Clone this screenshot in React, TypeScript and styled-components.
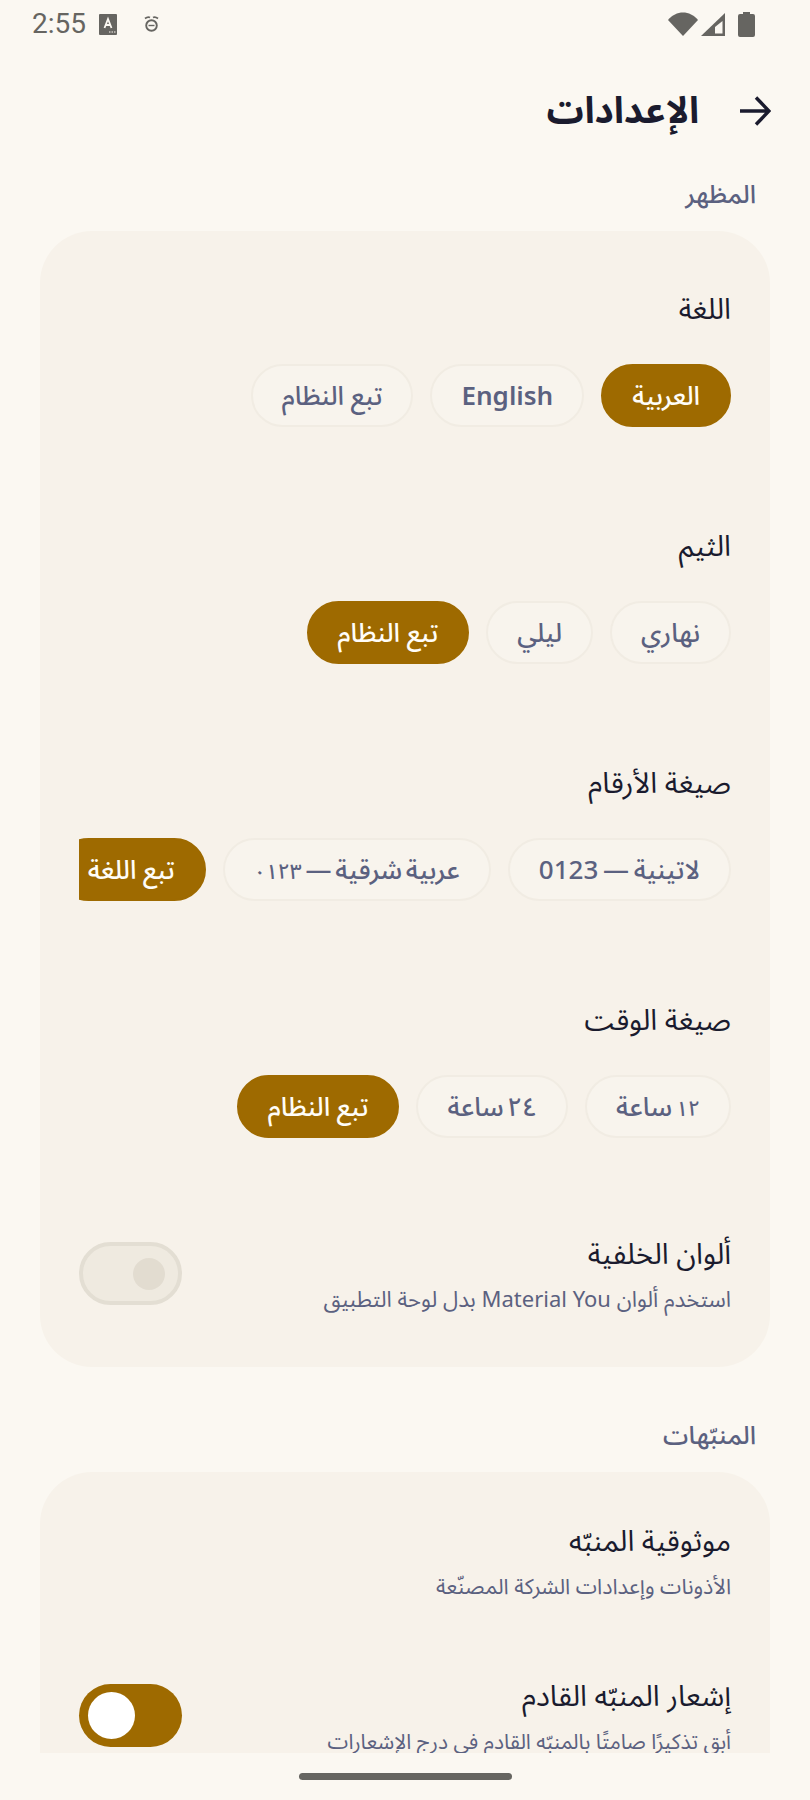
import React from 'react';
import styled, { createGlobalStyle } from 'styled-components';

const GlobalStyle = createGlobalStyle`
  html, body {
    margin: 0;
    padding: 0;
    background: #fbf8f2;
  }
  * {
    box-sizing: border-box;
  }
`

const Screen = styled.div`
  width: 810px;
  height: 1800px;
  overflow: hidden;
  background: #fbf8f2;
  font-family: "Noto Sans Arabic", "IBM Plex Sans Arabic", "Noto Sans", "DejaVu Sans", sans-serif;
  display: flex;
  flex-direction: column;
`
const StatusBar = styled.div`
  height: 48px;
  flex-shrink: 0;
  display: flex;
  align-items: center;
  justify-content: space-between;
  padding: 0 55px 0 32px;
  color: #666561;
`
const StatusLeft = styled.div`
  display: flex;
  align-items: center;
  gap: 13px;
`
const StatusRight = styled.div`
  display: flex;
  align-items: center;
  gap: 3px;
`
const AlarmSlot = styled.span`
  display: flex;
  margin-left: 14px;
`
const BatterySlot = styled.span`
  display: flex;
  margin-left: 10px;
`
const Clock = styled.span`
  font-family: Roboto, sans-serif;
  font-size: 28px;
  line-height: 48px;
`
const Content = styled.div`
  height: 1705px;
  flex-shrink: 0;
  overflow: hidden;
  direction: rtl;
`
const Header = styled.div`
  height: 122px;
  display: flex;
  align-items: center;
  gap: 40px;
  padding: 4px 39px 0 0;
  color: #1a1b2e;
`
const Title = styled.h1`
  margin: 0;
  font-size: 37px;
  line-height: 60px;
  font-weight: 700;
`
const SectionLabel = styled.div`
  height: 61px;
  padding: 5px 54px 0 0;
  font-size: 25.5px;
  line-height: 40px;
  font-weight: 500;
  color: #5b6180;
`
const Card = styled.div`
  width: 730px;
  margin: 0 40px;
  padding: 50px 39px 49px;
  background: #f7f2ea;
  border-radius: 52px;
`
const SectionGap = styled.div`
  height: 44px;
`
const OptionGroup = styled.div`
  height: 237px;
  padding-top: 9px;
`
const RowLabel = styled.div`
  font-size: 29px;
  line-height: 40px;
  color: #1a1b2e;
`
const Chips = styled.div`
  margin-top: 34px;
  display: flex;
  gap: 17px;
  overflow: hidden;
`
const Chip = styled.div<{ $active?: boolean; $words?: number; $bold?: boolean }>`
  flex-shrink: 0;
  height: 63px;
  padding: 2px 29px 0;
  display: flex;
  align-items: center;
  border-radius: 32px;
  font-size: 26px;
  font-weight: ${props => props.$bold ? 600 : 500};
  white-space: pre;
  word-spacing: ${props => props.$words ?? 0}px;
  color: ${props => props.$active ? '#fffdf8' : '#5b6180'};
  background: ${props => props.$active ? '#9e6a00' : '#f8f4ed'};
  border: 2px solid ${props => props.$active ? '#9e6a00' : '#f1ece3'};
`
const Digits = styled.span<{ $size: number }>`
  font-size: ${props => props.$size}px;
`
const ToggleRow = styled.div<{ $top: number }>`
  margin-top: ${props => props.$top}px;
  display: flex;
  align-items: center;
  justify-content: space-between;
`
const RowText = styled.div`
  display: flex;
  flex-direction: column;
  gap: 7px;
`
const RowHint = styled.div<{ $size: number }>`
  font-size: ${props => props.$size}px;
  line-height: 36px;
  color: #5b6180;
  white-space: nowrap;
`
const Toggle = styled.div<{ $on?: boolean }>`
  flex-shrink: 0;
  width: 103px;
  height: 63px;
  margin-bottom: 6px;
  border-radius: 32px;
  display: flex;
  align-items: center;
  padding: ${props => props.$on ? '0 9px' : '0 13px'};
  justify-content: ${props => props.$on ? 'flex-end' : 'flex-start'};
  background: ${props => props.$on ? '#9e6a00' : '#efeae0'};
  border: ${props => props.$on ? 'none' : '4px solid #e3ded3'};
`
const Thumb = styled.div<{ $on?: boolean }>`
  width: ${props => props.$on ? 47 : 32}px;
  height: ${props => props.$on ? 47 : 32}px;
  border-radius: 50%;
  background: ${props => props.$on ? '#ffffff' : '#e2dcd0'};
`
const NavArea = styled.div`
  flex: 1;
  display: flex;
  justify-content: center;
  padding-top: 20px;
`
const NavPill = styled.div`
  width: 213px;
  height: 7px;
  border-radius: 4px;
  background: #666561;
`

interface ChipOption {
  label: string;
  digits?: string;
  digitsFirst?: boolean;
  digitSize?: number;
  words?: number;
  bold?: boolean;
  active?: boolean;
}

const OPTION_GROUPS: Array<{ title: string; options: ChipOption[] }> = [
  { title: 'اللغة', options: [{ label: 'العربية', active: true }, { label: 'English', bold: true }, { label: 'تبع النظام' }] },
  { title: 'الثيم', options: [{ label: 'نهاري' }, { label: 'ليلي' }, { label: 'تبع النظام', active: true }] },
  {
    title: 'صيغة الأرقام',
    options: [
      { label: 'لاتينية — 0123', words: -2 },
      { label: 'عربية شرقية — ', digits: '٠١٢٣', digitSize: 21, words: -3 },
      { label: 'تبع اللغة', active: true },
    ],
  },
  {
    title: 'صيغة الوقت',
    options: [
      { digits: '١٢', digitsFirst: true, digitSize: 21, label: ' ساعة', words: -3 },
      { digits: '٢٤', digitsFirst: true, digitSize: 26, label: ' ساعة', words: -3 },
      { label: 'تبع النظام', active: true },
    ],
  },
];

const KeyboardIcon = () => (
  <svg width="18" height="21" viewBox="0 0 18 21">
    <rect width="18" height="21" rx="1" fill="#666561" />
    <path d="M5.5 14 L9 5 L12.500 14 M7 11 H11" stroke="#fbf8f2" strokeWidth="1.800" fill="none" />
    <path d="M10 18 h1.500 M12.500 18 h1.500 M15 18 h1.500" stroke="#fbf8f2" strokeWidth="1.200" />
  </svg>
);

const AlarmIcon = () => (
  <svg width="15" height="16" viewBox="0 0 15 16" fill="none" stroke="#666561">
    <circle cx="7.500" cy="9.500" r="5.300" strokeWidth="1.900" />
    <path d="M4.500 9.500 H10.500" strokeWidth="1.400" />
    <path d="M1 2.500 C3 1 5 1 6 1.500 M14 2.500 C12 1 10 1 9 1.500" strokeWidth="1.800" />
  </svg>
);

const WifiIcon = () => (
  <svg width="30" height="24" viewBox="0 0 30 24">
    <path d="M0 8 C8 -2 22 -2 30 8 L15 24 Z" fill="#666561" />
  </svg>
);

const SignalIcon = () => (
  <svg width="24" height="23" viewBox="0 0 24 23">
    <path d="M24 0 V23 H0 Z" fill="#666561" />
    <path d="M21.500 8 V20.500 H14 V14 Z" fill="#fbf8f2" />
  </svg>
);

const BatteryIcon = () => (
  <svg width="17" height="25" viewBox="0 0 17 25">
    <path d="M5 0 H12 V2 H15 A2 2 0 0 1 17 4 V23 A2 2 0 0 1 15 25 H2 A2 2 0 0 1 0 23 V4 A2 2 0 0 1 2 2 H5 Z" fill="#666561" />
  </svg>
);

const BackArrow = () => (
  <svg width="32" height="30" viewBox="0 0 32 30" fill="none" stroke="#1a1b2e" strokeWidth="3.400">
    <path d="M1 15 H30 M17 1.500 L30 15 L17 28.500" />
  </svg>
);

const ChipText: React.FC<{ option: ChipOption }> = ({ option }) => {
  if (!option.digits) {
    return <>{option.label}</>;
  }
  const digits = <Digits $size={option.digitSize ?? 26}>{option.digits}</Digits>;
  return option.digitsFirst
    ? <span>{digits}{option.label}</span>
    : <span>{option.label}{digits}</span>;
};

const App: React.FC = () => {
  return (
    <Screen>
      <GlobalStyle />
      <StatusBar>
        <StatusLeft>
          <Clock>2:55</Clock>
          <KeyboardIcon />
          <AlarmSlot><AlarmIcon /></AlarmSlot>
        </StatusLeft>
        <StatusRight>
          <WifiIcon />
          <SignalIcon />
          <BatterySlot><BatteryIcon /></BatterySlot>
        </StatusRight>
      </StatusBar>
      <Content>
        <Header>
          <BackArrow />
          <Title>الإعدادات</Title>
        </Header>
        <SectionLabel>المظهر</SectionLabel>
        <Card>
          {OPTION_GROUPS.map(group => (
            <OptionGroup key={group.title}>
              <RowLabel>{group.title}</RowLabel>
              <Chips>
                {group.options.map(option => (
                  <Chip
                    key={option.label + option.digits}
                    $active={option.active}
                    $words={option.words}
                    $bold={option.bold}
                  >
                    <ChipText option={option} />
                  </Chip>
                ))}
              </Chips>
            </OptionGroup>
          ))}
          <ToggleRow $top={6}>
            <RowText>
              <RowLabel>ألوان الخلفية</RowLabel>
              <RowHint $size={22}>استخدم ألوان Material You بدل لوحة التطبيق</RowHint>
            </RowText>
            <Toggle><Thumb /></Toggle>
          </ToggleRow>
        </Card>
        <SectionGap />
        <SectionLabel>المنبّهات</SectionLabel>
        <Card>
          <ToggleRow $top={0}>
            <RowText>
              <RowLabel>موثوقية المنبّه</RowLabel>
              <RowHint $size={21.5}>الأذونات وإعدادات الشركة المصنّعة</RowHint>
            </RowText>
          </ToggleRow>
          <ToggleRow $top={72}>
            <RowText>
              <RowLabel>إشعار المنبّه القادم</RowLabel>
              <RowHint $size={21}>أبقِ تذكيرًا صامتًا بالمنبّه القادم في درج الإشعارات</RowHint>
            </RowText>
            <Toggle $on><Thumb $on /></Toggle>
          </ToggleRow>
        </Card>
      </Content>
      <NavArea>
        <NavPill />
      </NavArea>
    </Screen>
  );
};

export default App;
